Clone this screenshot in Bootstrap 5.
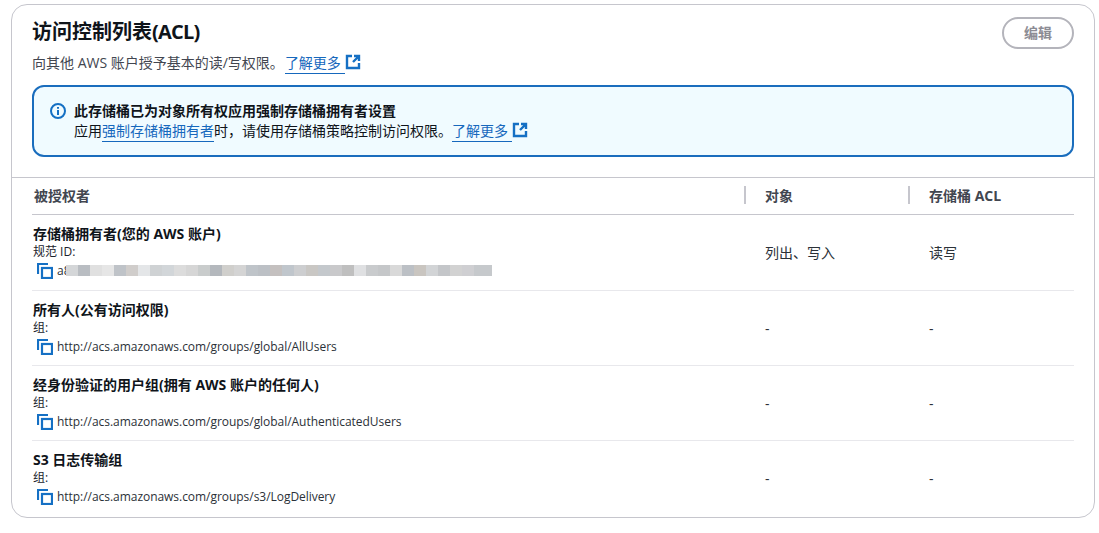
<!DOCTYPE html>
<html lang="zh-CN">
<head>
<meta charset="utf-8">
<title>访问控制列表(ACL)</title>
<link href="https://cdn.jsdelivr.net/npm/bootstrap@5.3.0/dist/css/bootstrap.min.css" rel="stylesheet">
<style>
body { background:#fff; color:#0f141a; font-family:"Open Sans","Noto Sans CJK SC",sans-serif; font-size:14px; line-height:20px; }
.page-wrap { padding:4px 4px 16px 11px; }
.acl-card { border:1px solid #c6c6cd; border-radius:16px; background:#fff; height:514px; overflow:hidden; }
.acl-head { padding:12px 20px 0 20px; height:172px; }
.acl-title { font-size:20px; line-height:30px; font-weight:700; margin:0; }
.title-latin { letter-spacing:-0.8px; }
.acl-desc { color:#424650; margin-top:6px; line-height:20px; }
.ext-link { color:#1668bd; text-decoration:none; }
.ext-link .lnk { border-bottom:1px solid #1668bd; padding-bottom:1px; }
.ext-link .lnk.gap { padding-right:4px; }
.link-a { margin-left:1px; }
.ext-ico { width:16px; height:16px; vertical-align:-2px; margin-left:0; }
.edit-btn { width:72px; height:32px; border:2px solid #b4b4bb; border-radius:16px; background:#fff; color:#8c8c94; font-weight:700; font-size:14px; line-height:28px; padding:0; text-align:center; }
.flash-box { margin-top:12px; height:72px; border:2px solid #1a6dbd; border-radius:12px; background:#f0fbff; padding:14px 16px; }
.info-ico { width:16px; height:16px; flex:none; margin-top:2px; }
.flash-title { font-weight:700; }
.acl-tbl-wrap { border-top:1px solid #c6c6cd; padding:0 20px; }
.acl-grid { width:100%; border-collapse:collapse; table-layout:fixed; margin:0; }
.acl-grid th { height:36px; padding:0 2px; color:#424650; font-weight:700; border-bottom:1px solid #c6c6cd; vertical-align:middle; }
.acl-grid th.sep { padding-left:21px; position:relative; }
.acl-grid th.sep::before { content:""; position:absolute; left:0; top:8px; height:18px; width:2px; background:#c6c6cd; }
.acl-grid td { height:75px; padding:10px 1px 0; border-bottom:1px solid #e8e8ec; vertical-align:top; color:#0f141a; }
.acl-grid tbody tr:first-child td { height:76px; }
.acl-grid td.val, .acl-grid tbody tr:first-child td.val { padding:2px 1px 0 21px; color:#2b3138; vertical-align:middle; }
.acl-grid tr:last-child td { border-bottom:0; }
.grantee { font-weight:700; line-height:18px; }
.sub-line { font-size:12px; line-height:18px; color:#1b232d; }
.url-line { font-size:12px; line-height:20px; letter-spacing:-0.04px; color:#2b3138; display:flex; align-items:center; gap:4px; padding-left:4px; }
.copy-ico { width:16px; height:16px; flex:none; }
.blur-id { display:block; position:relative; width:426px; height:11px; margin-left:-8px; background:linear-gradient(90deg,#d4d6d8 0 12px,#b9bdc2 12px 24px,#e0e0e0 24px 36px,#e6e6e6 36px 48px,#bfc3c8 48px 60px,#d0cdcb 60px 72px,#e4e6e8 72px 84px,#cfd2d4 84px 96px,#d2d6d9 96px 108px,#dcdcdc 108px 120px,#d6d6d6 120px 132px,#c9cccc 132px 144px,#b4b8bd 144px 156px,#d0cfcc 156px 168px,#d4d4d4 168px 180px,#bfc4c9 180px 192px,#bcc0c5 192px 204px,#c4c0bf 204px 216px,#c0c6cc 216px 228px,#cdced0 228px 240px,#c9c7c4 240px 252px,#c4c8cc 252px 264px,#c9c9cb 264px 276px,#bfbfbf 276px 288px,#dfe0e2 288px 300px,#c9cbcd 300px 312px,#c5c7c9 312px 324px,#d9d9d9 324px 336px,#bcc0c5 336px 348px,#c9c5c0 348px 360px,#d2d4d6 360px 372px,#c4c6c9 372px 384px,#d2d2d2 384px 396px,#cfcfd2 396px 408px,#c6c9cc 408px 426px); }
</style>
</head>
<body class="m-0">
<div class="page-wrap">
  <div class="acl-card">
    <div class="acl-head">
      <div class="d-flex justify-content-between align-items-start">
        <div>
          <h2 class="acl-title">访问控制列表<span class="title-latin">(ACL)</span></h2>
          <div class="acl-desc">向其他 AWS 账户授予基本的读/写权限。<a href="#" class="ext-link link-a"><span class="lnk gap">了解更多</span><svg class="ext-ico" viewBox="0 0 16 16" fill="none" stroke="#1570c4" stroke-width="2.4"><path d="M7 2H2v12h12V9"/><path d="M9 2h5v5M14 2L8 8"/></svg></a></div>
        </div>
        <button type="button" class="btn edit-btn">编辑</button>
      </div>
      <div class="flash-box d-flex gap-2">
        <svg class="info-ico" viewBox="0 0 16 16" fill="none" stroke="#1570c4" stroke-width="2"><circle cx="8" cy="8" r="7"/><path d="M8 7v5M8 4v1.8"/></svg>
        <div>
          <div class="flash-title">此存储桶已为对象所有权应用强制存储桶拥有者设置</div>
          <div>应用<a href="#" class="ext-link"><span class="lnk">强制存储桶拥有者</span></a>时，请使用存储桶策略控制访问权限。<a href="#" class="ext-link"><span class="lnk gap">了解更多</span><svg class="ext-ico" viewBox="0 0 16 16" fill="none" stroke="#1570c4" stroke-width="2.4"><path d="M7 2H2v12h12V9"/><path d="M9 2h5v5M14 2L8 8"/></svg></a></div>
        </div>
      </div>
    </div>
    <div class="acl-tbl-wrap">
      <table class="acl-grid">
        <colgroup><col style="width:712px"><col style="width:164px"><col></colgroup>
        <thead>
          <tr><th>被授权者</th><th class="sep">对象</th><th class="sep">存储桶 ACL</th></tr>
        </thead>
        <tbody>
          <tr>
            <td>
              <div class="grantee">存储桶拥有者(您的 AWS 账户)</div>
              <div class="sub-line">规范 ID:</div>
              <div class="url-line"><svg class="copy-ico" viewBox="0 0 16 16" fill="none" stroke="#1570c4" stroke-width="2.2"><path d="M1 11V1h10"/><rect x="5" y="5" width="10" height="10"/></svg><span>a8</span><span class="blur-id"></span></div>
            </td>
            <td class="val">列出、写入</td>
            <td class="val">读写</td>
          </tr>
          <tr>
            <td>
              <div class="grantee">所有人(公有访问权限)</div>
              <div class="sub-line">组:</div>
              <div class="url-line"><svg class="copy-ico" viewBox="0 0 16 16" fill="none" stroke="#1570c4" stroke-width="2.2"><path d="M1 11V1h10"/><rect x="5" y="5" width="10" height="10"/></svg><span>http://acs.amazonaws.com/groups/global/AllUsers</span></div>
            </td>
            <td class="val">-</td>
            <td class="val">-</td>
          </tr>
          <tr>
            <td>
              <div class="grantee">经身份验证的用户组(拥有 AWS 账户的任何人)</div>
              <div class="sub-line">组:</div>
              <div class="url-line"><svg class="copy-ico" viewBox="0 0 16 16" fill="none" stroke="#1570c4" stroke-width="2.2"><path d="M1 11V1h10"/><rect x="5" y="5" width="10" height="10"/></svg><span>http://acs.amazonaws.com/groups/global/AuthenticatedUsers</span></div>
            </td>
            <td class="val">-</td>
            <td class="val">-</td>
          </tr>
          <tr>
            <td>
              <div class="grantee">S3 日志传输组</div>
              <div class="sub-line">组:</div>
              <div class="url-line"><svg class="copy-ico" viewBox="0 0 16 16" fill="none" stroke="#1570c4" stroke-width="2.2"><path d="M1 11V1h10"/><rect x="5" y="5" width="10" height="10"/></svg><span>http://acs.amazonaws.com/groups/s3/LogDelivery</span></div>
            </td>
            <td class="val">-</td>
            <td class="val">-</td>
          </tr>
        </tbody>
      </table>
    </div>
  </div>
</div>
<script src="https://cdn.jsdelivr.net/npm/bootstrap@5.3.0/dist/js/bootstrap.bundle.min.js"></script>
</body>
</html>
